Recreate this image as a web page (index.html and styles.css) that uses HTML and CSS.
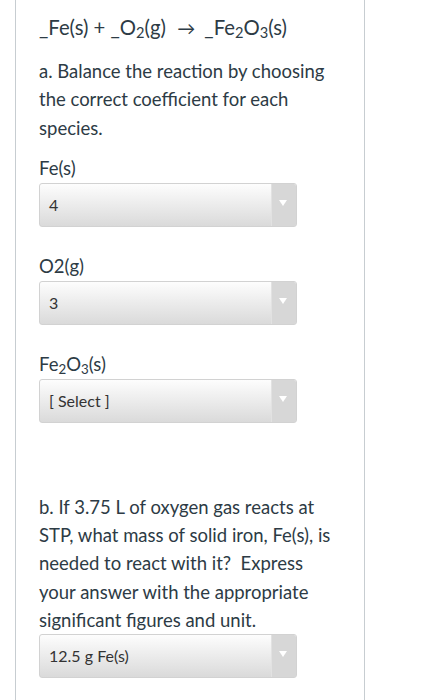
FILE: index.html
```html
<!DOCTYPE html>
<html lang="en">
<head>
    <meta charset="UTF-8">
    <meta name="viewport" content="width=device-width, initial-scale=1.0">
    <title>Question</title>
    <link rel="stylesheet" href="styles.css">
</head>
<body>
    <div class="question">
        <p class="question__equation">_Fe(s) + _O<sub>2</sub>(g) <span class="question__arrow">&rarr;</span> _Fe<sub>2</sub>O<sub>3</sub>(s)</p>
        <p class="question__text question__text--a">a. Balance the reaction by choosing the correct coefficient for each species.</p>

        <div class="field">
            <div class="field__label">Fe(s)</div>
            <div class="select">
                <span class="select__value">4</span>
                <span class="select__arrow"></span>
            </div>
        </div>
        <div class="field">
            <div class="field__label">O2(g)</div>
            <div class="select">
                <span class="select__value">3</span>
                <span class="select__arrow"></span>
            </div>
        </div>
        <div class="field">
            <div class="field__label">Fe<sub>2</sub>O<sub>3</sub>(s)</div>
            <div class="select">
                <span class="select__value">[ Select ]</span>
                <span class="select__arrow"></span>
            </div>
        </div>

        <p class="question__text question__text--b">b. If 3.75 L of oxygen gas reacts at STP, what mass of solid iron, Fe(s), is needed to react with it?&nbsp; Express your answer with the appropriate significant figures and unit.</p>
        <div class="select">
            <span class="select__value">12.5 g Fe(s)</span>
            <span class="select__arrow"></span>
        </div>
    </div>
</body>
</html>
```

FILE: styles.css
```css
:root {
    --textColor: #2d3b45;
    --borderColor: #c7cdd1;
}
html,
body {
    height: 100%;
}
body {
    margin: 0;
    background: #fff;
    color: var(--textColor);
    font-family: Lato, "Open Sans", sans-serif;
}

.question {
    box-sizing: border-box;
    width: 350px;
    min-height: 100%;
    margin-left: 15px;
    padding: 13px 30px 0 23px;
    border-left: 1px solid var(--borderColor);
    border-right: 1px solid var(--borderColor);
}

.question p {
    margin: 0;
}

.question__equation {
    font-size: 20.3px;
    line-height: 28px;
    white-space: nowrap;
}

.question__arrow {
    display: inline-block;
    margin: 0 4px 0 6px;
    font-size: 18px;
}

sub {
    font-size: 0.72em;
    line-height: 0;
    vertical-align: -0.2em;
}

.question__text {
    font-size: 18.5px;
    line-height: 28.3px;
}

.question__text--a {
    margin-top: 15px !important;
    margin-bottom: 13px !important;
}

.question__text--b {
    margin-top: 70px !important;
}

.field {
    margin-bottom: 26px;
}

.field__label {
    font-size: 18.5px;
    line-height: 26px;
    margin-bottom: 2px;
}

.select {
    box-sizing: border-box;
    display: flex;
    width: 258px;
    height: 44px;
    border: 1px solid #d2d2d2;
    border-radius: 3px;
    background: linear-gradient(#fdfdfd, #dadada);
    overflow: hidden;
}

.select__value {
    flex: 1;
    padding-left: 9px;
    font-size: 16px;
    line-height: 42px;
    color: #333;
}

.select__arrow {
    position: relative;
    width: 24px;
    border-left: 1px solid #e2e2e2;
    background: #d7d7d7;
}

.select__arrow::after {
    position: absolute;
    content: '';
    top: 16px;
    left: 7px;
    width: 0;
    height: 0;
    border-width: 6px 4px 0;
    border-style: solid;
    border-color: #fff transparent transparent;
}
```
